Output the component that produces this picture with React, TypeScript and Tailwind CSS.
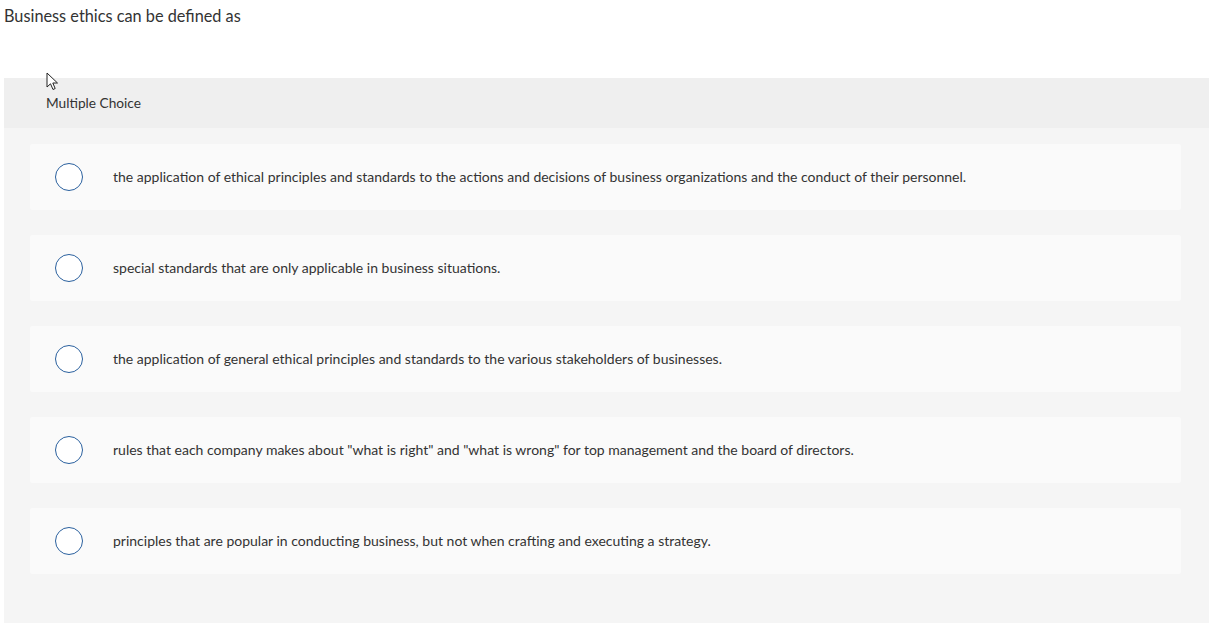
const options = [
  'the application of ethical principles and standards to the actions and decisions of business organizations and the conduct of their personnel.',
  'special standards that are only applicable in business situations.',
  'the application of general ethical principles and standards to the various stakeholders of businesses.',
  'rules that each company makes about "what is right" and "what is wrong" for top management and the board of directors.',
  'principles that are popular in conducting business, but not when crafting and executing a strategy.',
];

function Cursor() {
  return (
    <svg className="absolute left-[42px] top-[-6px]" width="14" height="20" viewBox="0 0 14 20">
      <path d="M1 1 L1 15 L4.5 11.8 L7 17.5 L9.2 16.5 L6.8 11 L11.5 11 Z" fill="#fff" stroke="#222" strokeWidth="1" strokeLinejoin="miter" />
    </svg>
  );
}

export default function App() {
  return (
    <div className="w-[1221px] h-[631px] bg-white text-[#333] font-['Lato',sans-serif] overflow-hidden">
      <div className="px-[4px] pt-[6px] h-[78px] text-[16.3px] leading-[20px]">Business ethics can be defined as</div>
      <div className="mx-[4px] w-[1205px] h-[545px] bg-[#f5f5f5]">
        <div className="relative h-[50px] bg-[#efefef] pl-[42px] pt-[16px] text-[13.7px] leading-[18px]">
          <Cursor />
          Multiple Choice
        </div>
        <div className="flex flex-col gap-[25px] pt-[16px] pl-[26px] pr-[28px]">
          {options.map((o) => (
            <label key={o} className="flex items-center h-[66px] bg-[#fafafa] rounded-[2px] pl-[25px] cursor-pointer">
              <span className="w-[28px] h-[28px] shrink-0 rounded-full border-[1.5px] border-[#2a609e] bg-white" />
              <span className="ml-[30px] text-[14px] leading-[18px]">{o}</span>
            </label>
          ))}
        </div>
      </div>
    </div>
  );
}
